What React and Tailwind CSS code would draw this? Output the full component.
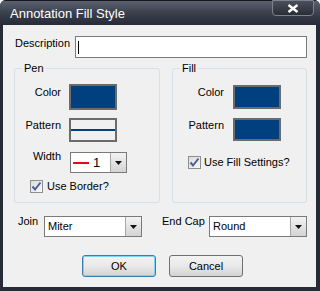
import React from 'react';

function DropArrow() {
  return (
    <div className="w-[16px] h-full border-l border-[#a7a7a7] bg-gradient-to-b from-[#f3f3f3] to-[#d4d4d4] flex items-center justify-center">
      <svg width="7" height="4" viewBox="0 0 7 4">
        <path d="M0 0 L7 0 L3.5 4 Z" fill="#111" />
      </svg>
    </div>
  );
}

function Checkbox() {
  return (
    <div className="w-[13px] h-[13px] border border-[#8e8f8f] bg-gradient-to-br from-[#dcdcdc] to-[#f8f8f8] flex items-center justify-center">
      <svg width="11" height="11" viewBox="0 0 11 11">
        <path d="M1.5 5.5 L4 8.5 L9.5 1.5" stroke="#4a5e9a" strokeWidth="2" fill="none" />
      </svg>
    </div>
  );
}

function Combo({ width, children }) {
  return (
    <div className={`${width} h-[21px] border border-[#7a7a7a] bg-white flex`}>
      <div className="flex-1 flex items-center min-w-0">{children}</div>
      <DropArrow />
    </div>
  );
}

function Button({ label, focused }) {
  return (
    <div
      className={`w-[74px] h-[22px] rounded-[3px] border flex items-center justify-center text-[11px] text-black bg-gradient-to-b from-[#f3f3f3] via-[#e9e9e9] to-[#d3d3d3] ${
        focused ? 'border-[#3d7bad] shadow-[inset_0_0_0_1px_#7fd3f5]' : 'border-[#707070]'
      }`}
    >
      {label}
    </div>
  );
}

export default function App() {
  return (
    <div className="w-[320px] h-[291px] flex flex-col rounded-t-[6px] overflow-hidden bg-[#262b37] font-['Liberation_Sans',Arial,sans-serif] text-[11px] leading-[13px] text-black">
      {/* Title bar */}
      <div className="h-[25px] flex items-start bg-gradient-to-b from-[#5b6170] via-[#3b404d] to-[#262b37] border-t border-[#15171d]">
        <span className="ml-[10px] mt-[5px] text-[13px] leading-[16px] text-white">Annotation Fill Style</span>
        <div className="ml-auto mr-[6px] w-[42px] h-[16px] -mt-px rounded-b-[4px] border border-[#7d828d] bg-gradient-to-b from-[#4a4f5c] to-[#2a2e38] flex items-center justify-center">
          <svg width="12" height="9" viewBox="0 0 12 9">
            <path d="M1.5 1 L10.5 8 M10.5 1 L1.5 8" stroke="#fff" strokeWidth="2.4" />
          </svg>
        </div>
      </div>

      {/* Client area */}
      <div className="flex-1 ml-[3px] mr-[4px] mb-[4px] bg-[#f0f0f0] flex flex-col">
        {/* Description */}
        <div className="flex items-start pt-[11px]">
          <span className="ml-[12px] w-[60px] mt-[1px]">Description</span>
          <div className="w-[232px] h-[22px] border border-[#7a7a7a] bg-white flex items-center">
            <span className="ml-[2px] w-px h-[13px] bg-black" />
          </div>
        </div>

        {/* Groups */}
        <div className="flex mt-[10px]">
          {/* Pen */}
          <div className="relative ml-[11px] w-[146px] h-[135px] border border-[#d5dfe5] rounded-[3px] pt-[15px]">
            <span className="absolute left-[7px] -top-[7px] px-[2px] bg-[#f0f0f0]">Pen</span>
            <div className="flex items-start">
              <span className="w-[46px] text-right mt-[2px]">Color</span>
              <div className="ml-[8px] w-[48px] h-[26px] border-2 border-[#6b6b6b] bg-[#01407f]" />
            </div>
            <div className="flex items-start mt-[8px]">
              <span className="w-[46px] text-right mt-[1px]">Pattern</span>
              <div className="ml-[8px] w-[48px] h-[24px] border-2 border-[#6b6b6b] bg-[#f0f0f0] flex items-center">
                <div className="w-full h-[2px] bg-[#01407f]" />
              </div>
            </div>
            <div className="flex items-start mt-[10px]">
              <span className="w-[46px] text-right -mt-[2px]">Width</span>
              <div className="ml-[9px]">
                <Combo width="w-[57px]">
                  <span className="ml-[2px] w-[16px] h-[2px] bg-[#e01010]" />
                  <span className="ml-[4px] text-[13px] leading-[15px]">1</span>
                </Combo>
              </div>
            </div>
            <div className="flex items-center mt-[7px] ml-[15px]">
              <Checkbox />
              <span className="ml-[4px]">Use Border?</span>
            </div>
          </div>

          {/* Fill */}
          <div className="relative ml-[12px] w-[135px] h-[135px] border border-[#d5dfe5] rounded-[3px] pt-[16px]">
            <span className="absolute left-[7px] -top-[7px] px-[2px] bg-[#f0f0f0]">Fill</span>
            <div className="flex items-start">
              <span className="w-[51px] text-right mt-[1px]">Color</span>
              <div className="ml-[9px] w-[48px] h-[24px] border-2 border-[#6b6b6b] bg-[#01407f]" />
            </div>
            <div className="flex items-start mt-[9px]">
              <span className="w-[51px] text-right mt-[1px]">Pattern</span>
              <div className="ml-[9px] w-[48px] h-[23px] border-2 border-[#6b6b6b] bg-[#01407f]" />
            </div>
            <div className="flex items-center mt-[15px] ml-[15px]">
              <Checkbox />
              <span className="ml-[3px]">Use Fill Settings?</span>
            </div>
          </div>
        </div>

        {/* Join / End Cap */}
        <div className="flex items-start mt-[13px]">
          <span className="ml-[15px] w-[26px] -mt-[1px]">Join</span>
          <Combo width="w-[98px]">
            <span className="ml-[3px]">Miter</span>
          </Combo>
          <span className="ml-[20px] w-[47px] -mt-[1px]">End Cap</span>
          <Combo width="w-[98px]">
            <span className="ml-[3px]">Round</span>
          </Combo>
        </div>

        {/* Buttons */}
        <div className="flex mt-[18px] ml-[79px] gap-[13px]">
          <Button label="OK" focused />
          <Button label="Cancel" />
        </div>
      </div>
    </div>
  );
}
